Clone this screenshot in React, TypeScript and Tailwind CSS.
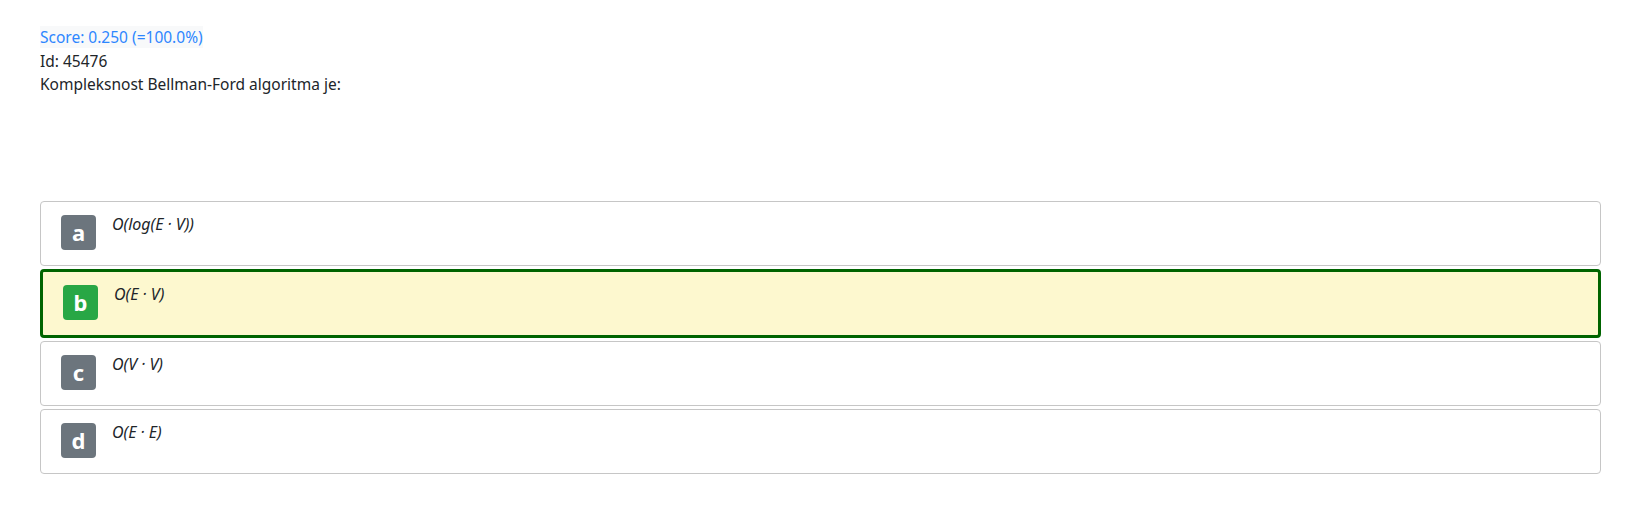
import React from "react";

const options = [
  { key: "a", text: "O(log(E · V))", picked: false },
  { key: "b", text: "O(E · V)", picked: true },
  { key: "c", text: "O(V · V)", picked: false },
  { key: "d", text: "O(E · E)", picked: false },
];

const Option = ({ letter, text, picked }: { letter: string; text: string; picked: boolean }) => (
  <div
    className={
      picked
        ? "flex items-start rounded-[4px] border-[3px] border-[#006400] bg-[#fdf8cf] pl-[20px] pt-[12px] h-[69px]"
        : "flex items-start rounded-[4px] border border-[#c6c6c6] bg-white pl-[20px] pt-[12px] h-[65px]"
    }
  >
    <span
      className={
        (picked ? "bg-[#28a745]" : "bg-[#6c757d]") +
        " mt-[1px] flex h-[35px] w-[35px] items-center justify-center rounded-[4px] text-[22px] font-bold leading-none text-white"
      }
    >
      {letter}
    </span>
    <span className="ml-[16px] text-[16px] italic leading-[20px] text-[#212529]">{text}</span>
  </div>
);

export default function App() {
  return (
    <div className="min-h-[525px] bg-white px-[40px] pt-[26px] text-[15.5px] text-[#212529] font-['Noto_Sans','Lato',sans-serif]">
      <div className="leading-[23.5px]">
        <div>
          <span className="bg-[#f8f9fa] text-[#2d86ff]">Score: 0.250 (=100.0%)</span>
        </div>
        <div>Id: 45476</div>
        <div>Kompleksnost Bellman-Ford algoritma je:</div>
      </div>
      <div className="mt-[104px] mr-[6px] flex flex-col gap-[3px]">
        {options.map((o) => (
          <Option key={o.key} letter={o.key} text={o.text} picked={o.picked} />
        ))}
      </div>
    </div>
  );
}
